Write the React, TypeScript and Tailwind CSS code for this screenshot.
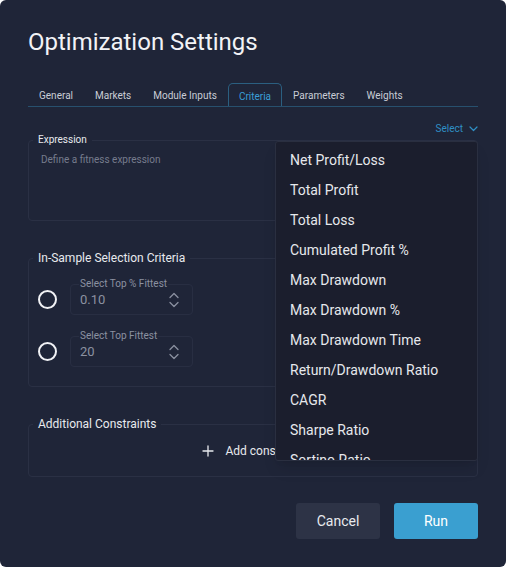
import React from 'react';

const tabs = ['General', 'Markets', 'Module Inputs', 'Criteria', 'Parameters', 'Weights'];

const metrics = [
  'Net Profit/Loss',
  'Total Profit',
  'Total Loss',
  'Cumulated Profit %',
  'Max Drawdown',
  'Max Drawdown %',
  'Max Drawdown Time',
  'Return/Drawdown Ratio',
  'CAGR',
  'Sharpe Ratio',
  'Sortino Ratio',
];

const Stepper = () => (
  <svg width="12" height="18" viewBox="0 0 12 18" fill="none" stroke="#8a90a0" strokeWidth="1.3" strokeLinecap="round" strokeLinejoin="round">
    <path d="M2 6.5 6 2.5l4 4" />
    <path d="M2 11.5l4 4 4-4" />
  </svg>
);

const NumberField = ({ label, value }: { label: string; value: string }) => (
  <fieldset className="w-[123px] h-[37px] border border-[#282e42] rounded-[4px] pl-[9px] pr-[12px] flex items-center justify-between">
    <legend className="ml-[-1px] px-px text-[10px] leading-[12px] text-[#8b91a1]">{label}</legend>
    <span className="text-[13px] leading-[16px] text-[#8b91a1] -mt-[5px]">{value}</span>
    <span className="-mt-[5px]"><Stepper /></span>
  </fieldset>
);

const Radio = () => (
  <div className="w-[19px] h-[19px] rounded-full border-2 border-[#f1f2f5] shrink-0 mt-[5px]" />
);

const App: React.FC = () => {
  return (
    <div className="w-[506px] h-[567px] bg-white" style={{ fontFamily: 'Roboto, "Noto Sans", sans-serif' }}>
      <div className="relative w-[506px] h-[567px] bg-[#1f2538] rounded-[6px] px-[28px] pt-[26px]">
        <h1 className="text-[24px] leading-[32px] text-[#f2f3f6] font-normal">Optimization Settings</h1>

        <div className="mt-[25px] flex border-b border-[#27506e]">
          {tabs.map(t =>
            t === 'Criteria' ? (
              <div key={t} className="h-[23px] pt-[2px] px-[10px] flex items-center text-[10px] text-[#3a9fd6] border border-b-0 border-[#2b5f80] rounded-t-[5px]">
                {t}
              </div>
            ) : (
              <div key={t} className="h-[23px] pt-[2px] px-[11px] flex items-center text-[10px] text-[#c9cdd6]">
                {t}
              </div>
            )
          )}
        </div>

        <div className="mt-[15px] h-[14px] flex justify-end items-center gap-[6px] text-[10px] leading-[14px] text-[#2f8fc4]">
          <span>Select</span>
          <svg width="9" height="6" viewBox="0 0 9 6" fill="none" stroke="#2f8fc4" strokeWidth="1.2" strokeLinecap="round" strokeLinejoin="round">
            <path d="M1 1l3.5 3.5L8 1" />
          </svg>
        </div>

        <fieldset className="-mt-[3px] h-[88px] border border-[#2a3044] rounded-[4px] px-[12px]">
          <legend className="ml-[-8px] px-[5px] text-[10px] leading-[14px] text-[#e8eaee]">Expression</legend>
          <div className="pt-[6px] text-[10px] leading-[13px] text-[#767c8d]">Define a fitness expression</div>
        </fieldset>

        <fieldset className="mt-[30px] border border-[#2a3044] rounded-[4px] pl-[9px] pt-[12px] pb-[19px]">
          <legend className="ml-[-5px] px-[5px] text-[12px] leading-[15px] text-[#e8eaee]">In-Sample Selection Criteria</legend>
          <div className="flex flex-col gap-[15px]">
            <div className="flex items-center gap-[13px]">
              <Radio />
              <NumberField label="Select Top % Fittest" value="0.10" />
            </div>
            <div className="flex items-center gap-[13px]">
              <Radio />
              <NumberField label="Select Top Fittest" value="20" />
            </div>
          </div>
        </fieldset>

        <fieldset className="mt-[30px] h-[60px] border border-[#2a3044] rounded-[4px] px-[9px]">
          <legend className="ml-[-5px] px-[5px] text-[12px] leading-[15px] text-[#e8eaee]">Additional Constraints</legend>
          <div className="flex justify-center items-center gap-[11px] pt-[11px] text-[12px] leading-[16px] text-[#e8eaee]">
            <svg width="12" height="12" viewBox="0 0 12 12" fill="none" stroke="#e8eaee" strokeWidth="1.3" strokeLinecap="round">
              <path d="M6 1v10M1 6h10" />
            </svg>
            <span>Add constraint</span>
          </div>
        </fieldset>

        <div className="mt-[26px] flex justify-end gap-[14px]">
          <button className="w-[84px] h-[36px] rounded-[3px] bg-[#2d3346] text-[14px] text-[#e8eaee]">Cancel</button>
          <button className="w-[84px] h-[36px] rounded-[3px] bg-[#3a9fd0] text-[14px] text-white">Run</button>
        </div>

        <div className="absolute left-[275px] top-[141px] w-[203px] h-[320px] bg-[#1b1e2d] border border-[#2a2f40] rounded-[3px] overflow-hidden pt-[3px] shadow-lg">
          {metrics.map(m => (
            <div key={m} className="h-[30px] px-[14px] flex items-center text-[14px] text-[#e6e8ec]">
              {m}
            </div>
          ))}
        </div>
      </div>
    </div>
  );
};

export default App;
